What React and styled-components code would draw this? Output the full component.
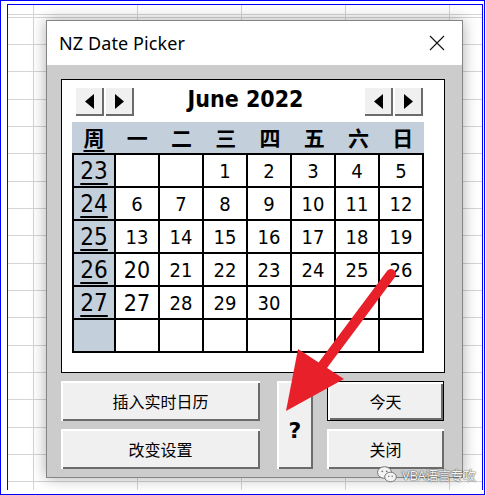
import React from "react";
import styled, { createGlobalStyle, css } from "styled-components";

const Global = createGlobalStyle`
  html, body { margin: 0; padding: 0; background: #fff; }
  body { font-family: "Noto Sans", "Noto Sans CJK SC", sans-serif; }
  * { box-sizing: border-box; }
`;

const Frame = styled.div`
  position: relative;
  width: 485px;
  height: 495px;
  border: 1px solid #0000ff;
  padding: 3px 1px 4px 6px;
  background: #fff;
  overflow: hidden;
`;

const Sheet = styled.div`
  height: 100%;
  border: 1px solid #0000ff;
  border-bottom: none;
  padding: 15px 0 0 38px;
  background-color: #fff;
  background-image:
    linear-gradient(to right, #d4d4d4 1px, transparent 1px),
    repeating-linear-gradient(to bottom,
      #d4d4d4 0, #d4d4d4 1px, transparent 1px, transparent 27px,
      #d4d4d4 27px, #d4d4d4 28px, transparent 28px, transparent 55px,
      #d4d4d4 55px, #d4d4d4 56px, transparent 56px, transparent 82px),
    linear-gradient(to bottom, #d4d4d4 1px, transparent 1px);
  background-size: 104px 100%, 100% 82px, 100% 100%;
  background-position: 25px 0, 0 39px, 0 9px;
  background-repeat: repeat-x, repeat-y, no-repeat;
`;

const Dialog = styled.div`
  width: 417px;
  height: 458px;
  border: 1px solid #858585;
  background: #cccccc;
  box-shadow: 0 0 14px rgba(0, 0, 0, 0.32);
  display: flex;
  flex-direction: column;
`;

const TitleBar = styled.div`
  height: 44px;
  background: #fff;
  display: flex;
  align-items: center;
  justify-content: space-between;
  padding: 0 17px 0 12px;
`;

const Title = styled.span`
  font-family: "Noto Sans", sans-serif;
  font-size: 18px;
  color: #000;
  letter-spacing: 0.1px;
`;

const Body = styled.div`
  flex: 1;
  padding: 14px 0 0 14px;
  display: flex;
  flex-direction: column;
  gap: 8px;
`;

const Panel = styled.div`
  width: 384px;
  height: 294px;
  border: 1px solid #000;
  background: #fff;
  padding: 6px 20px 0 10px;
  display: flex;
  flex-direction: column;
`;

const NavRow = styled.div`
  height: 30px;
  display: flex;
  align-items: center;
  padding: 0 1px 0 2px;
  margin-bottom: 6px;
`;

const NavPair = styled.div`
  display: flex;
`;

const bevel = css`
  background: #f0f0f0;
  box-shadow: inset 2px 2px 0 #ffffff, inset -2px -2px 0 #6b6b6b;
`;

const NavButton = styled.div`
  ${bevel};
  width: 30px;
  height: 30px;
  display: flex;
  align-items: center;
  justify-content: center;
`;

const MonthTitle = styled.div`
  flex: 1;
  text-align: center;
  font-family: "DejaVu Sans Condensed", "DejaVu Sans", sans-serif;
  font-weight: bold;
  font-size: 23px;
  line-height: 1;
  color: #000;
  padding: 0 6px 4px 0;
`;

const cols = css`
  display: grid;
  grid-template-columns: 40px repeat(7, 1fr);
  column-gap: 2px;
  width: 352px;
`;

const HeaderBand = styled.div`
  ${cols};
  height: 31px;
  padding-left: 2px;
  background: #c3cfdb;
  align-items: center;
`;

const HeadCell = styled.div`
  text-align: center;
  font-family: "Noto Sans CJK SC", sans-serif;
  font-weight: bold;
  font-size: 21px;
  line-height: 1;
  color: #000;
  padding-bottom: 1px;
  text-decoration: ${(p) => (p.$underline ? "underline" : "none")};
  text-underline-offset: 4px;
  text-decoration-thickness: 2px;
`;

const DayGrid = styled.div`
  ${cols};
  height: 200px;
  padding: 2px;
  gap: 2px;
  background: #000;
  grid-template-rows: repeat(6, 1fr);
`;

const Cell = styled.div`
  background: ${(p) => (p.$week ? "#c3cfdb" : "#fff")};
  display: flex;
  align-items: center;
  justify-content: center;
  font-family: "DejaVu Sans Condensed", "DejaVu Sans", sans-serif;
  font-size: ${(p) => (p.$week ? "24px" : p.$big ? "23px" : "20px")};
  color: #000;
  text-decoration: ${(p) => (p.$week ? "underline" : "none")};
  text-underline-offset: 4px;
  text-decoration-thickness: 1.5px;
  padding-top: 1px;
`;

const ButtonArea = styled.div`
  display: flex;
  height: 88px;
`;

const Column = styled.div`
  width: ${(p) => p.$w}px;
  display: flex;
  flex-direction: column;
  gap: 8px;
`;

const Button = styled.div`
  ${bevel};
  height: 40px;
  display: flex;
  align-items: center;
  justify-content: center;
  font-family: "Noto Sans CJK SC", sans-serif;
  font-size: 16px;
  color: #000;
  ${(p) =>
    p.$default &&
    css`
      border: 1px solid #000;
    `}
`;

const HelpButton = styled.div`
  ${bevel};
  width: 36px;
  margin: 0 14px 0 17px;
  display: flex;
  align-items: center;
  justify-content: center;
  padding-top: 10px;
  font-family: "DejaVu Sans", sans-serif;
  font-weight: bold;
  font-size: 22px;
  color: #000;
`;

const Overlay = styled.svg`
  position: absolute;
  left: 0;
  top: 0;
  pointer-events: none;
`;

const Watermark = styled.div`
  position: absolute;
  left: 376px;
  top: 464px;
  display: flex;
  align-items: center;
  gap: 5px;
  white-space: nowrap;
  font-family: "Noto Sans", "Noto Sans CJK SC", sans-serif;
  font-size: 13px;
  letter-spacing: -0.4px;
  color: #f4f4f4;
  text-shadow: 0 0 1.5px rgba(0, 0, 0, 0.75), 0 0 1px rgba(0, 0, 0, 0.5);
`;

const LeftTri = () => (
  <svg width="9" height="15" viewBox="0 0 9 15">
    <polygon points="9,0 0,7.5 9,15" fill="#000" />
  </svg>
);
const RightTri = () => (
  <svg width="9" height="15" viewBox="0 0 9 15">
    <polygon points="0,0 9,7.5 0,15" fill="#000" />
  </svg>
);

const Pair = () => (
  <NavPair>
    <NavButton>
      <LeftTri />
    </NavButton>
    <NavButton>
      <RightTri />
    </NavButton>
  </NavPair>
);

const heads = ["周", "一", "二", "三", "四", "五", "六", "日"];
const rows = [
  ["23", ["", "", 1, 2, 3, 4, 5]],
  ["24", [6, 7, 8, 9, 10, 11, 12]],
  ["25", [13, 14, 15, 16, 17, 18, 19]],
  ["26", [20, 21, 22, 23, 24, 25, 26]],
  ["27", [27, 28, 29, 30, "", "", ""]],
  ["", ["", "", "", "", "", "", ""]],
];

export default function App() {
  return (
    <>
      <Global />
      <Frame>
        <Sheet>
          <Dialog>
            <TitleBar>
              <Title>NZ Date Picker</Title>
              <svg width="16" height="16" viewBox="0 0 16 16">
                <path d="M1 1 L15 15 M15 1 L1 15" stroke="#111" strokeWidth="1.1" fill="none" />
              </svg>
            </TitleBar>
            <Body>
              <Panel>
                <NavRow>
                  <Pair />
                  <MonthTitle>June 2022</MonthTitle>
                  <Pair />
                </NavRow>
                <HeaderBand>
                  {heads.map((h, i) => (
                    <HeadCell key={i} $underline={i === 0}>
                      {h}
                    </HeadCell>
                  ))}
                </HeaderBand>
                <DayGrid>
                  {rows.map(([wk, days], r) => (
                    <React.Fragment key={r}>
                      <Cell $week>{wk}</Cell>
                      {days.map((d, c) => (
                        <Cell key={c} $big={c === 0 && (d === 20 || d === 27)}>
                          {d}
                        </Cell>
                      ))}
                    </React.Fragment>
                  ))}
                </DayGrid>
              </Panel>
              <ButtonArea>
                <Column $w={199}>
                  <Button>插入实时日历</Button>
                  <Button>改变设置</Button>
                </Column>
                <HelpButton>?</HelpButton>
                <Column $w={117}>
                  <Button $default>今天</Button>
                  <Button>关闭</Button>
                </Column>
              </ButtonArea>
            </Body>
          </Dialog>
        </Sheet>
        <Overlay width="485" height="495" viewBox="0 0 485 495">
          <line x1="390" y1="273" x2="316" y2="372" stroke="#e8202a" strokeWidth="10" strokeLinecap="round" />
          <polygon points="285,410 343,378 297,348" fill="#e8202a" />
        </Overlay>
        <Watermark>
          <svg width="20" height="17" viewBox="0 0 20 17">
            <ellipse cx="7.5" cy="6.5" rx="7" ry="5.8" fill="#f4f4f4" stroke="#777" strokeWidth="1" />
            <circle cx="5.3" cy="5.3" r="0.9" fill="#777" />
            <circle cx="9.7" cy="5.3" r="0.9" fill="#777" />
            <ellipse cx="13.5" cy="11" rx="5.8" ry="4.8" fill="#f4f4f4" stroke="#777" strokeWidth="1" />
            <circle cx="11.8" cy="10.3" r="0.8" fill="#777" />
            <circle cx="15.2" cy="10.3" r="0.8" fill="#777" />
          </svg>
          <span>VBA语言专攻</span>
        </Watermark>
      </Frame>
    </>
  );
}
